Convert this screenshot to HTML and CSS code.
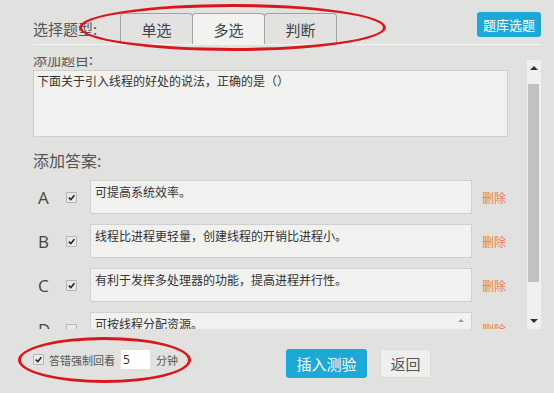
FILE: index.html
```html
<!DOCTYPE html>
<html lang="zh-CN">
<head>
  <meta charset="UTF-8">
  <meta name="viewport" content="width=device-width, initial-scale=1.0">
  <title>添加测验题</title>
  <link rel="stylesheet" href="styles.css">
</head>
<body>
  <div class="page">
    <div class="header">
      <span class="header-title">选择题型:</span>
      <div class="tabs">
        <div class="tab">单选</div>
        <div class="tab active">多选</div>
        <div class="tab">判断</div>
      </div>
      <button class="button button-blue bank-btn">题库选题</button>
    </div>

    <div class="editor">
      <div class="editor-body">
        <div class="editor-inner">
          <div class="field-label">添加题目:</div>
          <div class="question-box">下面关于引入线程的好处的说法，正确的是（）</div>
          <div class="section-label">添加答案:</div>

          <div class="answer">
            <span class="answer-letter">A</span>
            <span class="check checked"><svg viewBox="0 0 10 10"><path d="M2 5.2 L4.2 7.4 L8.2 2.4"/></svg></span>
            <div class="answer-box">可提高系统效率。</div>
            <a class="delete-link">删除</a>
          </div>
          <div class="answer">
            <span class="answer-letter">B</span>
            <span class="check checked"><svg viewBox="0 0 10 10"><path d="M2 5.2 L4.2 7.4 L8.2 2.4"/></svg></span>
            <div class="answer-box">线程比进程更轻量，创建线程的开销比进程小。</div>
            <a class="delete-link">删除</a>
          </div>
          <div class="answer">
            <span class="answer-letter">C</span>
            <span class="check checked"><svg viewBox="0 0 10 10"><path d="M2 5.2 L4.2 7.4 L8.2 2.4"/></svg></span>
            <div class="answer-box">有利于发挥多处理器的功能，提高进程并行性。</div>
            <a class="delete-link">删除</a>
          </div>
          <div class="answer">
            <span class="answer-letter">D</span>
            <span class="check"></span>
            <div class="answer-box answer-box-scroll">可按线程分配资源。<span class="mini-arrow"></span></div>
            <a class="delete-link">删除</a>
          </div>
        </div>
      </div>
      <div class="scrollbar">
        <div class="scroll-arrow"><span class="arrow-up"></span></div>
        <div class="scroll-thumb"></div>
        <div class="scroll-arrow scroll-arrow-down"><span class="arrow-down"></span></div>
      </div>
    </div>

    <div class="footer">
      <div class="review">
        <span class="check checked"><svg viewBox="0 0 10 10"><path d="M2 5.2 L4.2 7.4 L8.2 2.4"/></svg></span>
        <span class="review-text">答错强制回看</span>
        <input class="review-input" type="text" value="5">
        <span class="review-text">分钟</span>
      </div>
      <button class="button button-blue insert-btn">插入测验</button>
      <button class="button back-btn">返回</button>
    </div>

    <div class="mark mark-tabs"></div>
    <div class="mark mark-review"></div>
  </div>
</body>
</html>
```

FILE: styles.css
```css
body {
  margin: 0;
  background-color: #e1e1df;
  font-family: "Noto Sans CJK SC", "Noto Sans", sans-serif;
  color: #555;
}
.page {
  position: relative;
  width: 554px;
  height: 393px;
  overflow: hidden;
}

/* header with the type tabs */
.header {
  display: flex;
  align-items: flex-end;
  width: 508px;
  height: 44px;
  margin-left: 33px;
  border-bottom: 1px solid #f3f3f2;
}
.header-title {
  font-size: 15px;
  line-height: 31px;
  width: 87px;
  color: #555;
}
.tabs {
  display: flex;
}
.tab {
  width: 71px;
  height: 31px;
  line-height: 31px;
  text-align: center;
  font-size: 15px;
  color: #444;
  background-color: #e2e2e1;
  border: 1px solid #a3a3a3;
  border-bottom: none;
  border-radius: 4px 4px 0 0;
  box-sizing: border-box;
  width: 73px;
}
.tab + .tab {
  margin-left: -1px;
}
.tab.active {
  background-color: #f2f2f1;
}

.button {
  font-family: inherit;
  border: none;
  border-radius: 3px;
  padding: 0;
  cursor: pointer;
}
.button-blue {
  background-color: #1ca9d6;
  color: #fff;
}
.bank-btn {
  align-self: flex-start;
  margin-top: 12px;
  margin-left: auto;
  width: 64px;
  height: 25px;
  font-size: 13px;
  line-height: 25px;
}

/* scrolling editor */
.editor {
  display: flex;
  width: 508px;
  height: 272px;
  margin: 12px 0 0 33px;
}
.editor-body {
  flex: 1;
  overflow: hidden;
}
.editor-inner {
  margin-top: -7px;
}
.field-label {
  font-size: 14px;
  line-height: 18px;
  color: #555;
}
.question-box {
  margin-top: 2px;
  width: 475px;
  height: 67px;
  box-sizing: border-box;
  background-color: #f1f1f0;
  border: 1px solid #cfcfce;
  padding: 2px 3px;
  font-size: 12px;
  line-height: 16px;
  color: #333;
}
.section-label {
  margin-top: 14px;
  font-size: 16px;
  line-height: 18px;
  color: #555;
}
.answer {
  display: flex;
  align-items: center;
  height: 34px;
  margin-top: 10px;
}
.section-label + .answer {
  margin-top: 11px;
}
.answer-letter {
  width: 28px;
  padding-left: 5px;
  font-family: "Open Sans", "Noto Sans", sans-serif;
  font-size: 17px;
  color: #444;
}
.check {
  display: inline-block;
  width: 9px;
  height: 9px;
  border: 1px solid #b5b5b5;
  border-radius: 1px;
  background-color: #e9e9e8;
  flex-shrink: 0;
}
.check svg {
  display: block;
  width: 9px;
  height: 9px;
}
.check path {
  fill: none;
  stroke: #222;
  stroke-width: 1.8;
}
.answer-box {
  position: relative;
  margin-left: 13px;
  width: 382px;
  height: 34px;
  box-sizing: border-box;
  background-color: #f1f1f0;
  border: 1px solid #d0d0cf;
  padding: 3px 4px;
  font-size: 12px;
  line-height: 16px;
  color: #333;
}
.mini-arrow {
  position: absolute;
  right: 7px;
  top: 6px;
  border-left: 3px solid transparent;
  border-right: 3px solid transparent;
  border-bottom: 3px solid #999;
}
.delete-link {
  margin-left: 10px;
  font-size: 12px;
  color: #f07a52;
  cursor: pointer;
}

/* fake scrollbar */
.scrollbar {
  display: flex;
  flex-direction: column;
  width: 14px;
  height: 269px;
  margin-top: 3px;
  background-color: #f0f0ef;
}
.scroll-arrow {
  height: 16px;
  display: flex;
  align-items: center;
  justify-content: center;
}
.scroll-arrow-down {
  margin-top: auto;
}
.arrow-up {
  border-left: 4px solid transparent;
  border-right: 4px solid transparent;
  border-bottom: 4px solid #333;
}
.arrow-down {
  border-left: 4px solid transparent;
  border-right: 4px solid transparent;
  border-top: 4px solid #333;
}
.scroll-thumb {
  height: 198px;
  margin: 8px 2px 0 1px;
  background-color: #c1c1c0;
}

/* footer */
.footer {
  display: flex;
  align-items: flex-start;
  padding-left: 33px;
}
.review {
  display: flex;
  align-items: center;
  margin-top: 21px;
  width: 253px;
}
.review .check {
  margin-right: 5px;
}
.review-text {
  font-size: 11px;
  color: #555;
}
.review-input {
  width: 29px;
  height: 19px;
  box-sizing: border-box;
  margin: 0 6px;
  border: none;
  padding: 0 2px;
  background-color: #fff;
  font-family: "Open Sans", sans-serif;
  font-size: 12px;
  color: #333;
}
.insert-btn {
  margin-top: 20px;
  width: 81px;
  height: 29px;
  font-size: 15px;
}
.back-btn {
  margin-top: 20px;
  margin-left: 13px;
  width: 51px;
  height: 29px;
  font-size: 15px;
  color: #555;
  background-color: #efefee;
  border: 1px solid #dadad9;
}

/* red hand marks over the screenshot */
.mark {
  position: absolute;
  border: 3px solid #d9161d;
  border-radius: 50%;
  pointer-events: none;
}
.mark-tabs {
  left: 79px;
  top: 4px;
  width: 301px;
  height: 41px;
}
.mark-review {
  left: 18px;
  top: 337px;
  width: 167px;
  height: 40px;
}
```
